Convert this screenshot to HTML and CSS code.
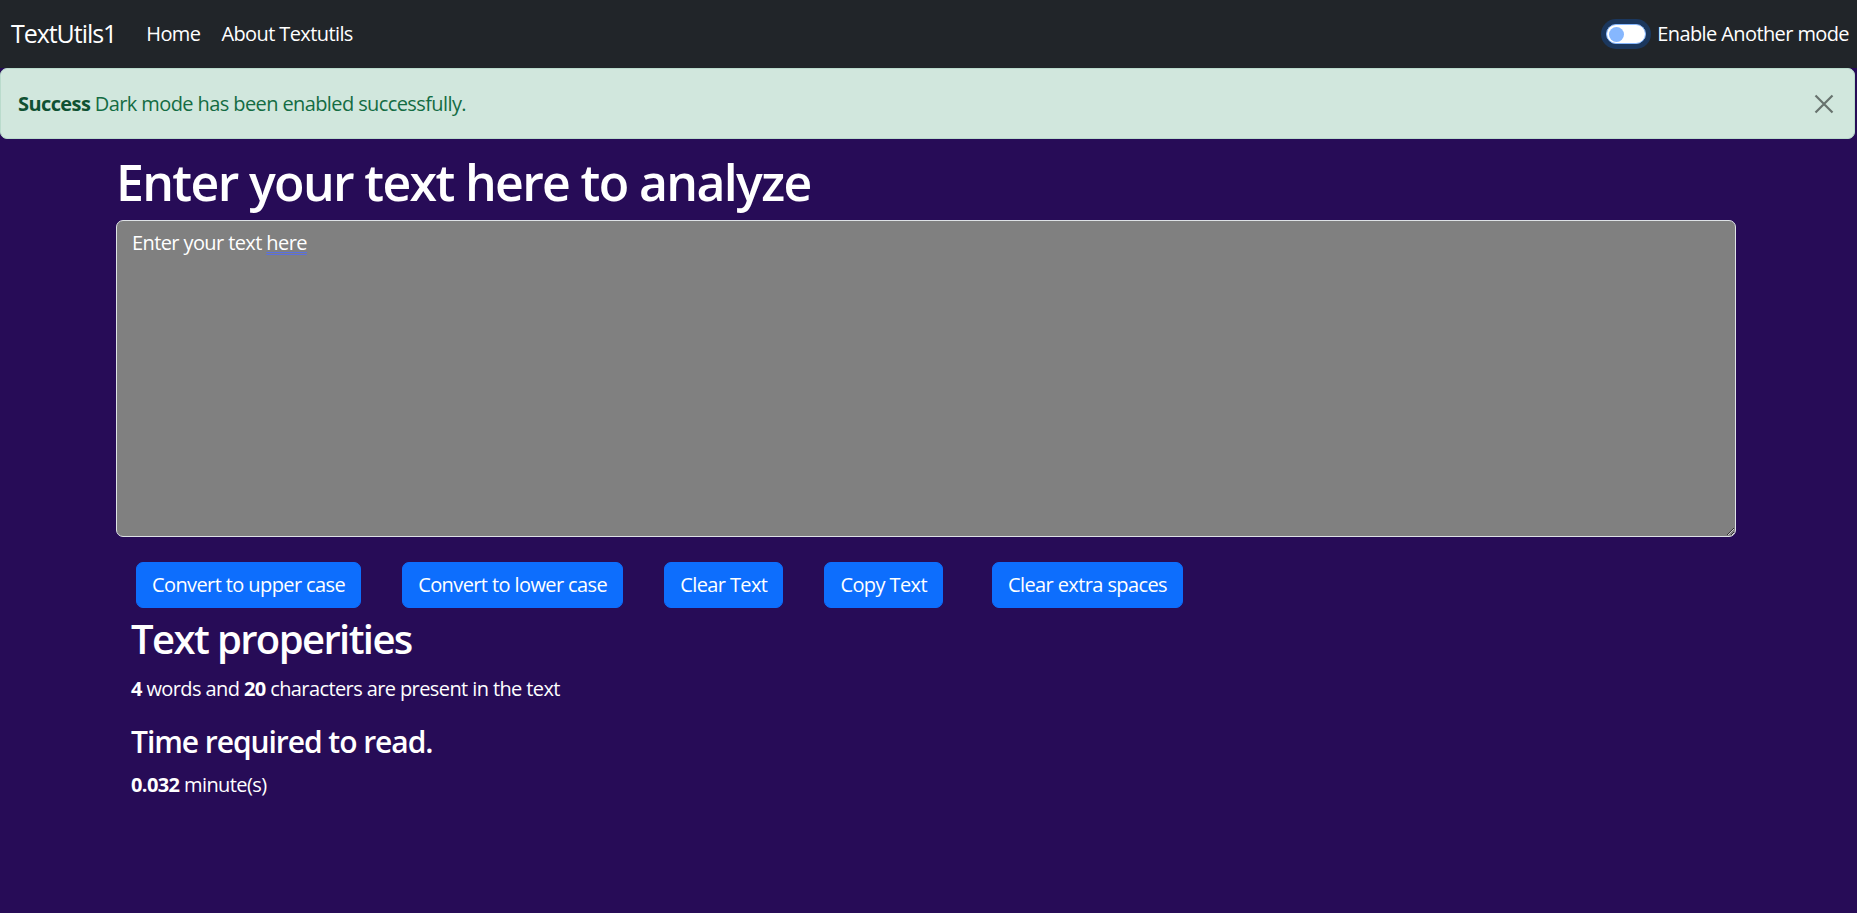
FILE: index.html
```html
<!DOCTYPE html>
<html lang="en">
<head>
<meta charset="utf-8">
<title>TextUtils1</title>
<link rel="stylesheet" href="styles.css">
</head>
<body>
<nav class="navbar">
  <div class="nav-left">
    <a class="brand" href="#">TextUtils1</a>
    <a class="nav-link" href="#">Home</a>
    <a class="nav-link" href="#">About Textutils</a>
  </div>
  <div class="mode-toggle">
    <div class="switch"><div class="knob"></div></div>
    <span class="switch-label">Enable Another mode</span>
  </div>
</nav>
<div class="alert">
  <div class="alert-text"><strong>Success</strong> Dark mode has been enabled successfully.</div>
  <svg class="close" width="20" height="20" viewBox="0 0 20 20"><path d="M1.5 1.5 L18.5 18.5 M18.5 1.5 L1.5 18.5" stroke="#000" stroke-width="2.2" stroke-linecap="butt" fill="none"/></svg>
</div>
<main class="container">
  <h1 class="title">Enter your text here to analyze</h1>
  <div class="textbox">Enter your text <span class="marked">here</span></div>
  <section class="inner">
    <div class="buttons">
      <button class="btn">Convert to upper case</button>
      <button class="btn">Convert to lower case</button>
      <button class="btn">Clear Text</button>
      <button class="btn">Copy Text</button>
      <button class="btn btn-wide-gap">Clear extra spaces</button>
    </div>
    <h2 class="sub">Text properities</h2>
    <p class="info"><b>4</b> words and <b>20</b> characters are present in the text</p>
    <h4 class="sub4">Time required to read.</h4>
    <p class="info"><b>0.032</b> minute(s)</p>
  </section>
</main>
</body>
</html>
```
FILE: styles.css
```css
* { box-sizing: border-box; }
html, body { margin: 0; padding: 0; }
body {
  background: #270c57;
  color: #fff;
  font-family: "Open Sans", "Noto Sans", sans-serif;
  letter-spacing: -0.03em;
  font-size: 20px;
  line-height: 30px;
  height: 913px;
  overflow: hidden;
}
.navbar {
  height: 68px;
  background: #212529;
  display: flex;
  align-items: center;
  justify-content: space-between;
  padding: 0 8px 0 11px;
}
.nav-left { display: flex; align-items: center; }
.brand {
  color: #fff;
  text-decoration: none;
  font-size: 25px;
  line-height: 37px;
  letter-spacing: -0.042em;
  margin-right: 30px;
  margin-top: -2px;
}
.nav-link {
  color: #fff;
  text-decoration: none;
  font-size: 20px;
  margin-right: 21px;
}
.mode-toggle { display: flex; align-items: center; }
.switch {
  width: 40px;
  height: 20px;
  border-radius: 10px;
  background: #fff;
  border: 1px solid #86b7fe;
  box-shadow: 0 0 0 5px rgba(13,110,253,.25);
  display: flex;
  align-items: center;
  padding-left: 2px;
  margin-right: 11px;
}
.knob {
  width: 15px;
  height: 15px;
  border-radius: 50%;
  background: #86b7fe;
}
.switch-label { font-size: 20px; }

.alert {
  margin-right: 2px;
  height: 71px;
  background: #d1e7dd;
  border: 1px solid #badbcc;
  border-radius: 7px;
  color: #146c43;
  display: flex;
  align-items: center;
  justify-content: space-between;
  padding: 0 20px 0 17px;
}
.alert-text strong { font-weight: 700; color: #0f5132; }
.close { opacity: .5; }

.container {
  width: 1620px;
  margin: 0 0 0 116px;
}
.title {
  font-size: 50px;
  line-height: 60px;
  font-weight: 600;
  letter-spacing: -0.033em;
  margin: 13px 0 8px;
}
.textbox {
  height: 317px;
  background: #808080;
  border: 1px solid #dee2e6;
  border-radius: 7px;
  padding: 7px 15px;
  color: #fff;
  resize: vertical;
  overflow: auto;
}
.marked {
  text-decoration: underline double #5a6fe0;
  text-decoration-thickness: 1px;
  text-underline-offset: 2px;
}
.inner { padding: 0 15px; }
.buttons {
  display: flex;
  margin-top: 25px;
}
.btn {
  font-family: inherit;
  letter-spacing: inherit;
  font-size: 20px;
  line-height: 30px;
  padding: 7px 15px;
  border: 1px solid #0d6efd;
  background: #0d6efd;
  color: #fff;
  border-radius: 7px;
  margin: 0 36px 0 5px;
}
.btn-wide-gap { margin-left: 13px; }
.sub {
  font-size: 40px;
  line-height: 48px;
  font-weight: 600;
  letter-spacing: -0.04em;
  margin: 7px 0 11px;
}
.info { margin: 0 0 20px; }
.info b { font-weight: 700; }
.sub4 {
  font-size: 30px;
  line-height: 36px;
  font-weight: 600;
  letter-spacing: -0.035em;
  margin: 0 0 10px;
}
```
